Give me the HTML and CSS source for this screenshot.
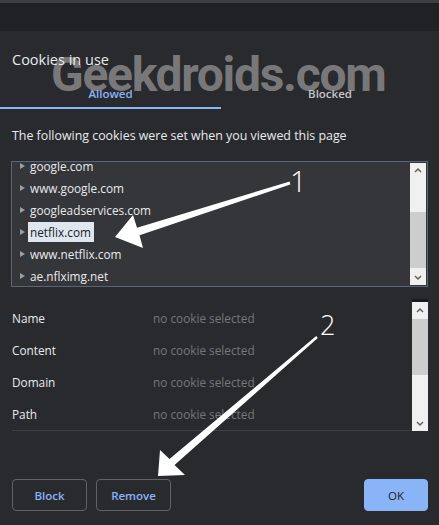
FILE: index.html
```html
<!DOCTYPE html>
<html lang="en">
<head>
  <meta charset="UTF-8" />
  <meta name="viewport" content="width=device-width, initial-scale=1.0"/>
  <title>Cookies in use</title>
  <link rel="stylesheet" href="styles.css">
</head>
<body>
  <div class="topbar"></div>

  <main class="dialog">
    <h1 class="title">Cookies in use</h1>

    <nav class="tabs">
      <a class="tab active" href="#allowed">Allowed</a>
      <a class="tab" href="#blocked">Blocked</a>
    </nav>

    <p class="intro">The following cookies were set when you viewed this page</p>

    <section class="cookie-list">
      <ul class="rows">
        <li><span class="caret"></span>google.com</li>
        <li><span class="caret"></span>www.google.com</li>
        <li><span class="caret"></span>googleadservices.com</li>
        <li><span class="caret"></span><span class="selected">netflix.com</span></li>
        <li><span class="caret"></span>www.netflix.com</li>
        <li><span class="caret"></span>ae.nflximg.net</li>
      </ul>
      <div class="scrollbar list-scroll">
        <svg class="chev" width="16" height="14" viewBox="0 0 16 14"><polyline points="5,9 8,6 11,9" /></svg>
        <div class="thumb"></div>
        <svg class="chev" width="16" height="14" viewBox="0 0 16 14"><polyline points="5,5 8,8 11,5" /></svg>
      </div>
    </section>

    <section class="details">
      <dl class="fields">
        <div class="field"><dt>Name</dt><dd>no cookie selected</dd></div>
        <div class="field"><dt>Content</dt><dd>no cookie selected</dd></div>
        <div class="field"><dt>Domain</dt><dd>no cookie selected</dd></div>
        <div class="field"><dt>Path</dt><dd>no cookie selected</dd></div>
      </dl>
      <div class="scrollbar detail-scroll">
        <svg class="chev" width="16" height="16" viewBox="0 0 16 16"><polyline points="5,10 8,7 11,10" /></svg>
        <div class="thumb"></div>
        <svg class="chev" width="16" height="16" viewBox="0 0 16 16"><polyline points="5,7 8,10 11,7" /></svg>
      </div>
    </section>

    <footer class="actions">
      <button class="btn">Block</button>
      <button class="btn">Remove</button>
      <button class="btn primary">OK</button>
    </footer>
  </main>

  <!-- watermark + annotation arrows over the screenshot -->
  <div class="watermark">Geekdroids.com</div>
  <svg class="annotations" width="439" height="525" viewBox="0 0 439 525">
    <polygon points="289.7,181.5 137,227.8 133,215 115,237 143,248 139.5,235.2 290.3,184.5" />
    <polygon points="316.2,336 169.5,459 160,450 158,476 185,475 174.5,465 317.8,338" />
  </svg>
  <div class="mark mark-1">1</div>
  <div class="mark mark-2">2</div>
</body>
</html>
```

FILE: styles.css
```css
:root {
  --bg: #292a2d;
  --dark: #202124;
  --text: #e8eaed;
  --muted: #75777b;
  --blue: #8ab4f8;
  --line: #5f6368;
}

body {
  font-family: 'Open Sans', 'Noto Sans', sans-serif;
  margin: 0;
  width: 439px;
  height: 525px;
  overflow: hidden;
  background-color: var(--bg);
  color: var(--text);
  position: relative;
}

.topbar {
  height: 28px;
  background-color: var(--dark);
  border-top: 3px solid #3d3e43;
}

.title {
  margin: 0;
  padding: 20px 12px 0;
  font-size: 14.5px;
  font-weight: normal;
  line-height: 18px;
  position: relative;
  z-index: 2;
}

.tabs {
  display: grid;
  grid-template-columns: 221px 1fr;
  margin-top: 17px;
  position: relative;
  z-index: 2;
}

.tab {
  text-align: center;
  font-size: 11.5px;
  font-weight: 600;
  color: #c4c6c9;
  text-decoration: none;
  line-height: 16px;
  padding-bottom: 5px;
  border-bottom: 2px solid transparent;
}

.tab.active {
  color: var(--blue);
  border-bottom-color: var(--blue);
}

.intro {
  margin: 0;
  padding: 18px 12px 0;
  font-size: 12.4px;
  line-height: 17px;
}

.cookie-list {
  display: flex;
  margin: 17px 11px 0 11px;
  height: 124px;
  border: 1px solid #5a6576;
  background-color: #35363a;
  overflow: hidden;
}

.rows {
  flex: 1;
  list-style: none;
  margin: -7px 0 0;
  padding: 0;
}

.rows li {
  display: flex;
  align-items: center;
  height: 22px;
  font-size: 11.8px;
  padding-left: 8px;
}

.caret {
  width: 0;
  height: 0;
  border-left: 5px solid #9aa0a6;
  border-top: 3.5px solid transparent;
  border-bottom: 3.5px solid transparent;
  margin-right: 5px;
}

.selected {
  background-color: #dfe6f0;
  color: #202124;
  padding: 2px 3px 2px 2px;
  margin-left: -2px;
}

.scrollbar {
  width: 16px;
  background-color: #f0f0f0;
  display: flex;
  flex-direction: column;
}

.list-scroll {
  margin: 1px 1px 1px 0;
}

.chev {
  display: block;
}

.chev polyline {
  fill: none;
  stroke: #606060;
  stroke-width: 1.5;
}

.list-scroll .thumb {
  height: 56px;
  margin-top: 35px;
  background-color: #cdcdcd;
}

.list-scroll .chev:last-child {
  margin-top: auto;
}

.details {
  display: flex;
  margin: 15px 11px 0 12px;
}

.fields {
  flex: 1;
  margin: 0;
  border-bottom: 1px solid #3e3f43;
}

.field {
  display: flex;
  align-items: center;
  height: 32px;
  font-size: 11.8px;
}

.field dt {
  width: 141px;
}

.field dd {
  margin: 0;
  color: var(--muted);
}

.detail-scroll {
  height: 129px;
  border-top: 3px solid #1a1a1c;
  margin-top: -3px;
}

.detail-scroll .thumb {
  height: 56px;
  margin-top: 1px;
  background-color: #cdcdcd;
}

.detail-scroll .chev:last-child {
  margin-top: auto;
}

.actions {
  display: flex;
  gap: 9px;
  margin: 48px 11px 0 12px;
}

.btn {
  width: 75px;
  height: 32px;
  border: 1px solid var(--line);
  border-radius: 4px;
  background-color: transparent;
  color: var(--blue);
  font-family: 'Open Sans', sans-serif;
  font-size: 11.5px;
  font-weight: 600;
}

.btn.primary {
  margin-left: auto;
  width: 64px;
  background-color: var(--blue);
  border-color: var(--blue);
  color: var(--dark);
  font-weight: normal;
}

.watermark {
  position: absolute;
  left: 51px;
  top: 45px;
  font-family: Roboto, sans-serif;
  font-weight: bold;
  font-size: 48px;
  letter-spacing: -1.3px;
  line-height: 60px;
  color: rgba(190, 190, 192, 0.55);
  z-index: 1;
}

.annotations {
  position: absolute;
  left: 0;
  top: 0;
  z-index: 3;
}

.annotations polygon {
  fill: #ffffff;
}

.mark {
  position: absolute;
  font-family: 'Open Sans', sans-serif;
  font-weight: 300;
  color: #ffffff;
  z-index: 3;
}

.mark-1 {
  left: 290px;
  top: 164px;
  font-size: 29px;
  line-height: 34px;
}

.mark-2 {
  left: 320px;
  top: 309px;
  font-size: 27px;
  line-height: 32px;
}
```
